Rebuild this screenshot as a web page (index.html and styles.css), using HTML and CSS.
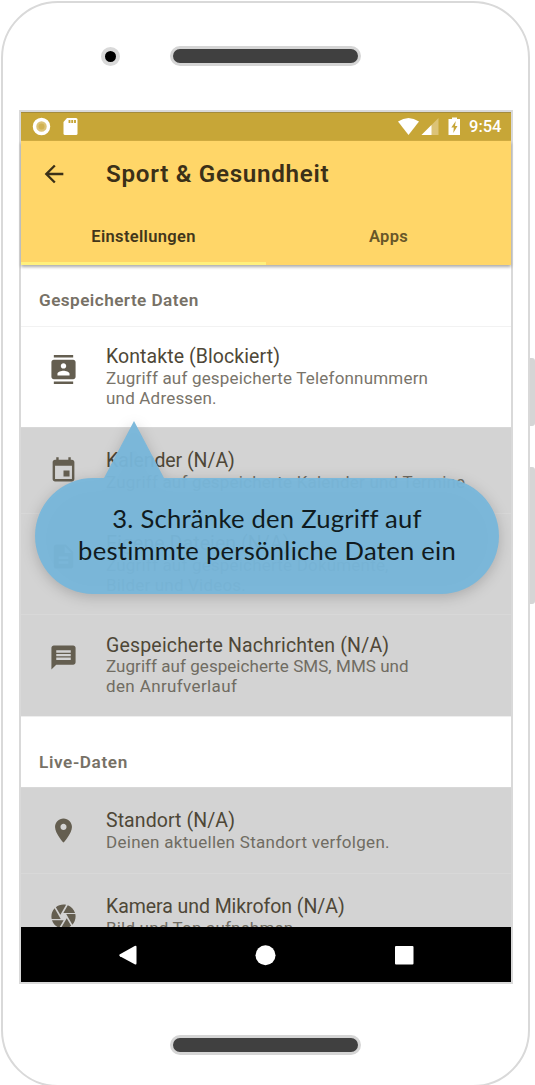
FILE: index.html
```html
<!DOCTYPE html>
<html lang="de">
<head>
<meta charset="utf-8">
<title>Sport &amp; Gesundheit</title>
<link rel="stylesheet" href="styles.css">
</head>
<body>
<div class="phone">
  <div class="top"><i class="camera"></i><i class="speaker"></i></div>
  <div class="screen">
    <div class="status">
      <svg class="status-left" viewBox="0 0 50 28"><circle cx="20.500" cy="14.500" r="7" fill="#dcc377" stroke="#fff" stroke-width="3.500"/><circle cx="20.500" cy="14.500" r="3" fill="#d1b252"/><path d="M46 6h9q1.500 0 1.500 1.500v14q0 1.500-1.500 1.500h-11q-1.500 0-1.500-1.500V10z" fill="#fff"/><path d="M48.500 8v3M51.200 8v3M54 8v3" stroke="#c7a637" stroke-width="1.900"/></svg>
      <svg class="status-right" viewBox="0 0 65 28"><path d="M0 9.500Q10.500 2.500 21 9.500L10.500 23z" fill="#fff"/><path d="M40.500 6v17h-17z" fill="#dcc377"/><path d="M33.500 13v10h-10z" fill="#fff"/><path d="M51.500 7h2.500V5.500h5V7H62v16H50.500V7z" fill="#fff"/><path d="M57.800 9l-4.500 6.500h2.500l-.500 5.500 4.200-7H57z" fill="#c7a637"/></svg>
      <span class="clock">9:54</span>
    </div>
    <header class="appbar">
      <div class="titlebar">
        <svg class="back" viewBox="0 0 24 24"><path d="M20 11H7.830l5.590-5.590L12 4l-8 8 8 8 1.410-1.410L7.830 13H20v-2z"/></svg>
        <h1>Sport &amp; Gesundheit</h1>
      </div>
      <nav class="tabs"><div class="tab active">Einstellungen</div><div class="tab">Apps</div></nav>
    </header>
    <main class="list">
      <h2 class="first">Gespeicherte Daten</h2>
      <section class="row tall">
        <svg class="icon" viewBox="0 0 24 24"><path d="M20 0H4v2h16V0zM4 24h16v-2H4v2zM20 4H4c-1.100 0-2 .900-2 2v12c0 1.100.900 2 2 2h16c1.100 0 2-.900 2-2V6c0-1.100-.900-2-2-2zm-8 2.750c1.240 0 2.250 1.010 2.250 2.250s-1.010 2.250-2.250 2.250S9.750 10.240 9.750 9 10.760 6.750 12 6.750zM17 17H7v-1.500c0-1.670 3.330-2.500 5-2.500s5 .830 5 2.500V17z"/></svg>
        <div><h3>Kontakte (Blockiert)</h3><p>Zugriff auf gespeicherte Telefonnummern<br>und Adressen.</p></div>
      </section>
      <section class="row blocked">
        <svg class="icon" viewBox="0 0 24 24"><path d="M17 12h-5v5h5v-5zM16 1v2H8V1H6v2H5c-1.110 0-1.990.900-1.990 2L3 19c0 1.100.890 2 2 2h14c1.100 0 2-.900 2-2V5c0-1.100-.900-2-2-2h-1V1h-2zm3 18H5V8h14v11z"/></svg>
        <div><h3 class="snug">Kalender (N/A)</h3><p>Zugriff auf gespeicherte Kalender und Termine</p></div>
      </section>
      <section class="row blocked tall">
        <svg class="icon" viewBox="0 0 24 24"><path d="M14 2H6c-1.100 0-1.990.900-1.990 2L4 20c0 1.100.890 2 1.990 2H18c1.100 0 2-.900 2-2V8l-6-6zm2 16H8v-2h8v2zm0-4H8v-2h8v2zm-3-5V3.500L18.500 9H13z"/></svg>
        <div><h3>Eigene Dateien (N/A)</h3><p>Zugriff auf gespeicherte Dokumente,<br>Bilder und Videos.</p></div>
      </section>
      <section class="row blocked tall messages">
        <svg class="icon" viewBox="0 0 24 24"><path d="M20 2H4c-1.100 0-1.990.900-1.990 2L2 22l4-4h14c1.100 0 2-.900 2-2V4c0-1.100-.900-2-2-2zm-2 12H6v-2h12v2zm0-3H6V9h12v2zm0-3H6V6h12v2z"/></svg>
        <div><h3 class="loose">Gespeicherte Nachrichten (N/A)</h3><p><span class="tight">Zugriff auf gespeicherte SMS, MMS und</span><br><span class="wide">den Anrufverlauf</span></p></div>
      </section>
      <h2 class="second">Live-Daten</h2>
      <section class="row blocked">
        <svg class="icon" viewBox="0 0 24 24"><path d="M12 2C8.130 2 5 5.130 5 9c0 5.250 7 13 7 13s7-7.750 7-13c0-3.870-3.130-7-7-7zm0 9.500c-1.380 0-2.500-1.120-2.500-2.500s1.120-2.500 2.500-2.500 2.500 1.120 2.500 2.500-1.120 2.500-2.500 2.500z"/></svg>
        <div><h3>Standort (N/A)</h3><p class="location">Deinen aktuellen Standort verfolgen.</p></div>
      </section>
      <section class="row blocked">
        <svg class="icon" viewBox="0 0 24 24"><path d="M9.400 10.500l4.770-8.260C13.470 2.090 12.750 2 12 2c-2.400 0-4.600.850-6.320 2.250l3.660 6.350.060-.100zM21.540 9c-.920-2.920-3.150-5.260-6-6.340L11.880 9h9.660zm.260 1h-7.490l.290.500 4.760 8.250C21 16.970 22 14.610 22 12c0-.690-.070-1.350-.200-2zM8.540 12l-3.900-6.750C3.010 7.030 2 9.390 2 12c0 .690.070 1.350.200 2h7.490l-1.150-2zm-6.080 3c.920 2.920 3.150 5.260 6 6.340L12.120 15H2.460zm11.270 0l-3.900 6.760c.700.150 1.420.240 2.170.240 2.400 0 4.600-.850 6.320-2.250l-3.660-6.350-.930 1.600z"/></svg>
        <div><h3 class="snug">Kamera und Mikrofon (N/A)</h3><p>Bild und Ton aufnehmen</p></div>
      </section>
    </main>
    <div class="navbar">
      <svg viewBox="0 0 490 55"><path d="M98.500 27.500q-.7 1 .4 1.800l14.800 8q1.800.8 1.800-1V20q0-2-1.800-1z"/><circle cx="244.500" cy="28.300" r="10"/><rect x="374" y="19" width="18.500" height="18.500" rx="1"/></svg>
    </div>
  </div>
  <i class="speaker bottom"></i>
  <i class="side power"></i><i class="side volume"></i>
  <div class="callout">
    <svg class="bubble" viewBox="0 0 464 173"><path d="M99 0L129 57H406a58 58 0 0 1 0 116H58a58 58 0 0 1 0-116H69z"/></svg>
    <p class="message">3. Schränke den Zugriff auf<br>bestimmte persönliche Daten ein</p>
  </div>
</div>
</body>
</html>
```
FILE: styles.css
```css
*{box-sizing:border-box}
body{margin:0;background:#fff;font-family:Roboto,sans-serif;width:535px;height:1085px;overflow:hidden}
h1,h2,h3,p{margin:0;font-weight:400}
.phone{position:relative;width:529px;height:1086px;margin:1px 0 0 1px;border:2px solid #d9d9d9;border-radius:57px;padding-left:16px}
.top{display:flex;align-items:center;height:107px;padding:0 0 1px 81.500px}
.camera{width:19px;height:19px;border:4px solid #d9d9d9;border-radius:50%;background:#000}
.speaker{display:block;width:191px;height:20px;border:3px solid #d5d5d5;border-radius:10px;background:#404040}
.top .speaker{margin-left:50.500px}
.speaker.bottom{margin:51px 0 0 151px}
.screen{width:494px;height:874px;border:2px solid #d9d9d9;display:flex;flex-direction:column}
.status{height:29px;flex:none;background:#c7a637;border-top:1px solid #a48b3c;border-bottom:1px solid #d3ad42;padding-bottom:1px;display:flex;align-items:center;color:#fff}
.status svg{height:28px;overflow:visible}
.status-left{width:50px}
.status-right{width:65px;margin-left:327px}
.clock{font-size:16.500px;font-weight:500;margin:1px 0 0 6px}
.appbar{height:124px;flex:none;background:#ffd668;box-shadow:0 2px 3px #0005;position:relative}
.titlebar{display:flex;align-items:center;height:66px;padding-left:18.500px}
.back{width:28px;height:28px;fill:#3b3018;margin-right:38.500px}
h1{font-size:24.200px;font-weight:600;letter-spacing:.700px;color:#3b3018}
.tabs{display:flex;height:58px}
.tab{flex:1;text-align:center;padding-top:20px;font-size:16.500px;line-height:20px;font-weight:600;letter-spacing:.320px;color:#685629}
.tab.active{color:#42361b;border-bottom:3px solid #fff07c}
.list{height:662px;flex:none;overflow:hidden}
h2{font-size:17.200px;font-weight:600;letter-spacing:.430px;color:#777166;padding-left:18px;line-height:20px}
.first{height:61px;padding-top:25px}
.second{height:71px;padding-top:35px;border-top:1px solid #eee;letter-spacing:.600px}
.row{height:86px;display:flex;padding:21px 0 0 27.500px;border-top:1px solid #d9d9d9;color:#79746a}
.tall{height:101px;padding-top:18px;border-top-color:#f2f2f2}
.messages{height:102px}
.blocked{background:#d3d3d3;border-top-color:#d8d8d8;color:#706c62}
.icon{width:29px;height:29px;flex:none;margin:7px 28.500px 0 0;fill:#645e50}
.tall .icon{margin-top:10px}
h3{font-size:19.500px;line-height:24px;letter-spacing:.080px;color:#4e4737}
p{font-size:17px;line-height:19.500px;letter-spacing:.190px;white-space:nowrap}
h3.snug{letter-spacing:-.060px}
h3.loose{letter-spacing:.180px}
.messages h3{padding-top:1px;height:24px}
.tight{letter-spacing:.050px}
.wide{letter-spacing:.370px}
.location{letter-spacing:.280px}
.navbar{height:55px;background:#000}
.navbar svg{display:block;width:490px;height:55px;fill:#fff}
.side{position:absolute;left:527px;width:5px;background:#d5d5d5;border-radius:0 3px 3px 0}
.power{top:355px;height:68px}
.volume{top:464px;height:137px}
.callout{position:absolute;left:32px;top:418px;width:464px;height:173px;padding-top:81px;text-align:center}
.bubble{position:absolute;inset:0;width:464px;height:173px;overflow:visible;fill:#78b6daf5;filter:drop-shadow(0 3px 7px #0003)}
.message{position:relative;font-family:Lato,sans-serif;font-size:25.600px;line-height:32px;letter-spacing:.250px;color:#101b20}
```
